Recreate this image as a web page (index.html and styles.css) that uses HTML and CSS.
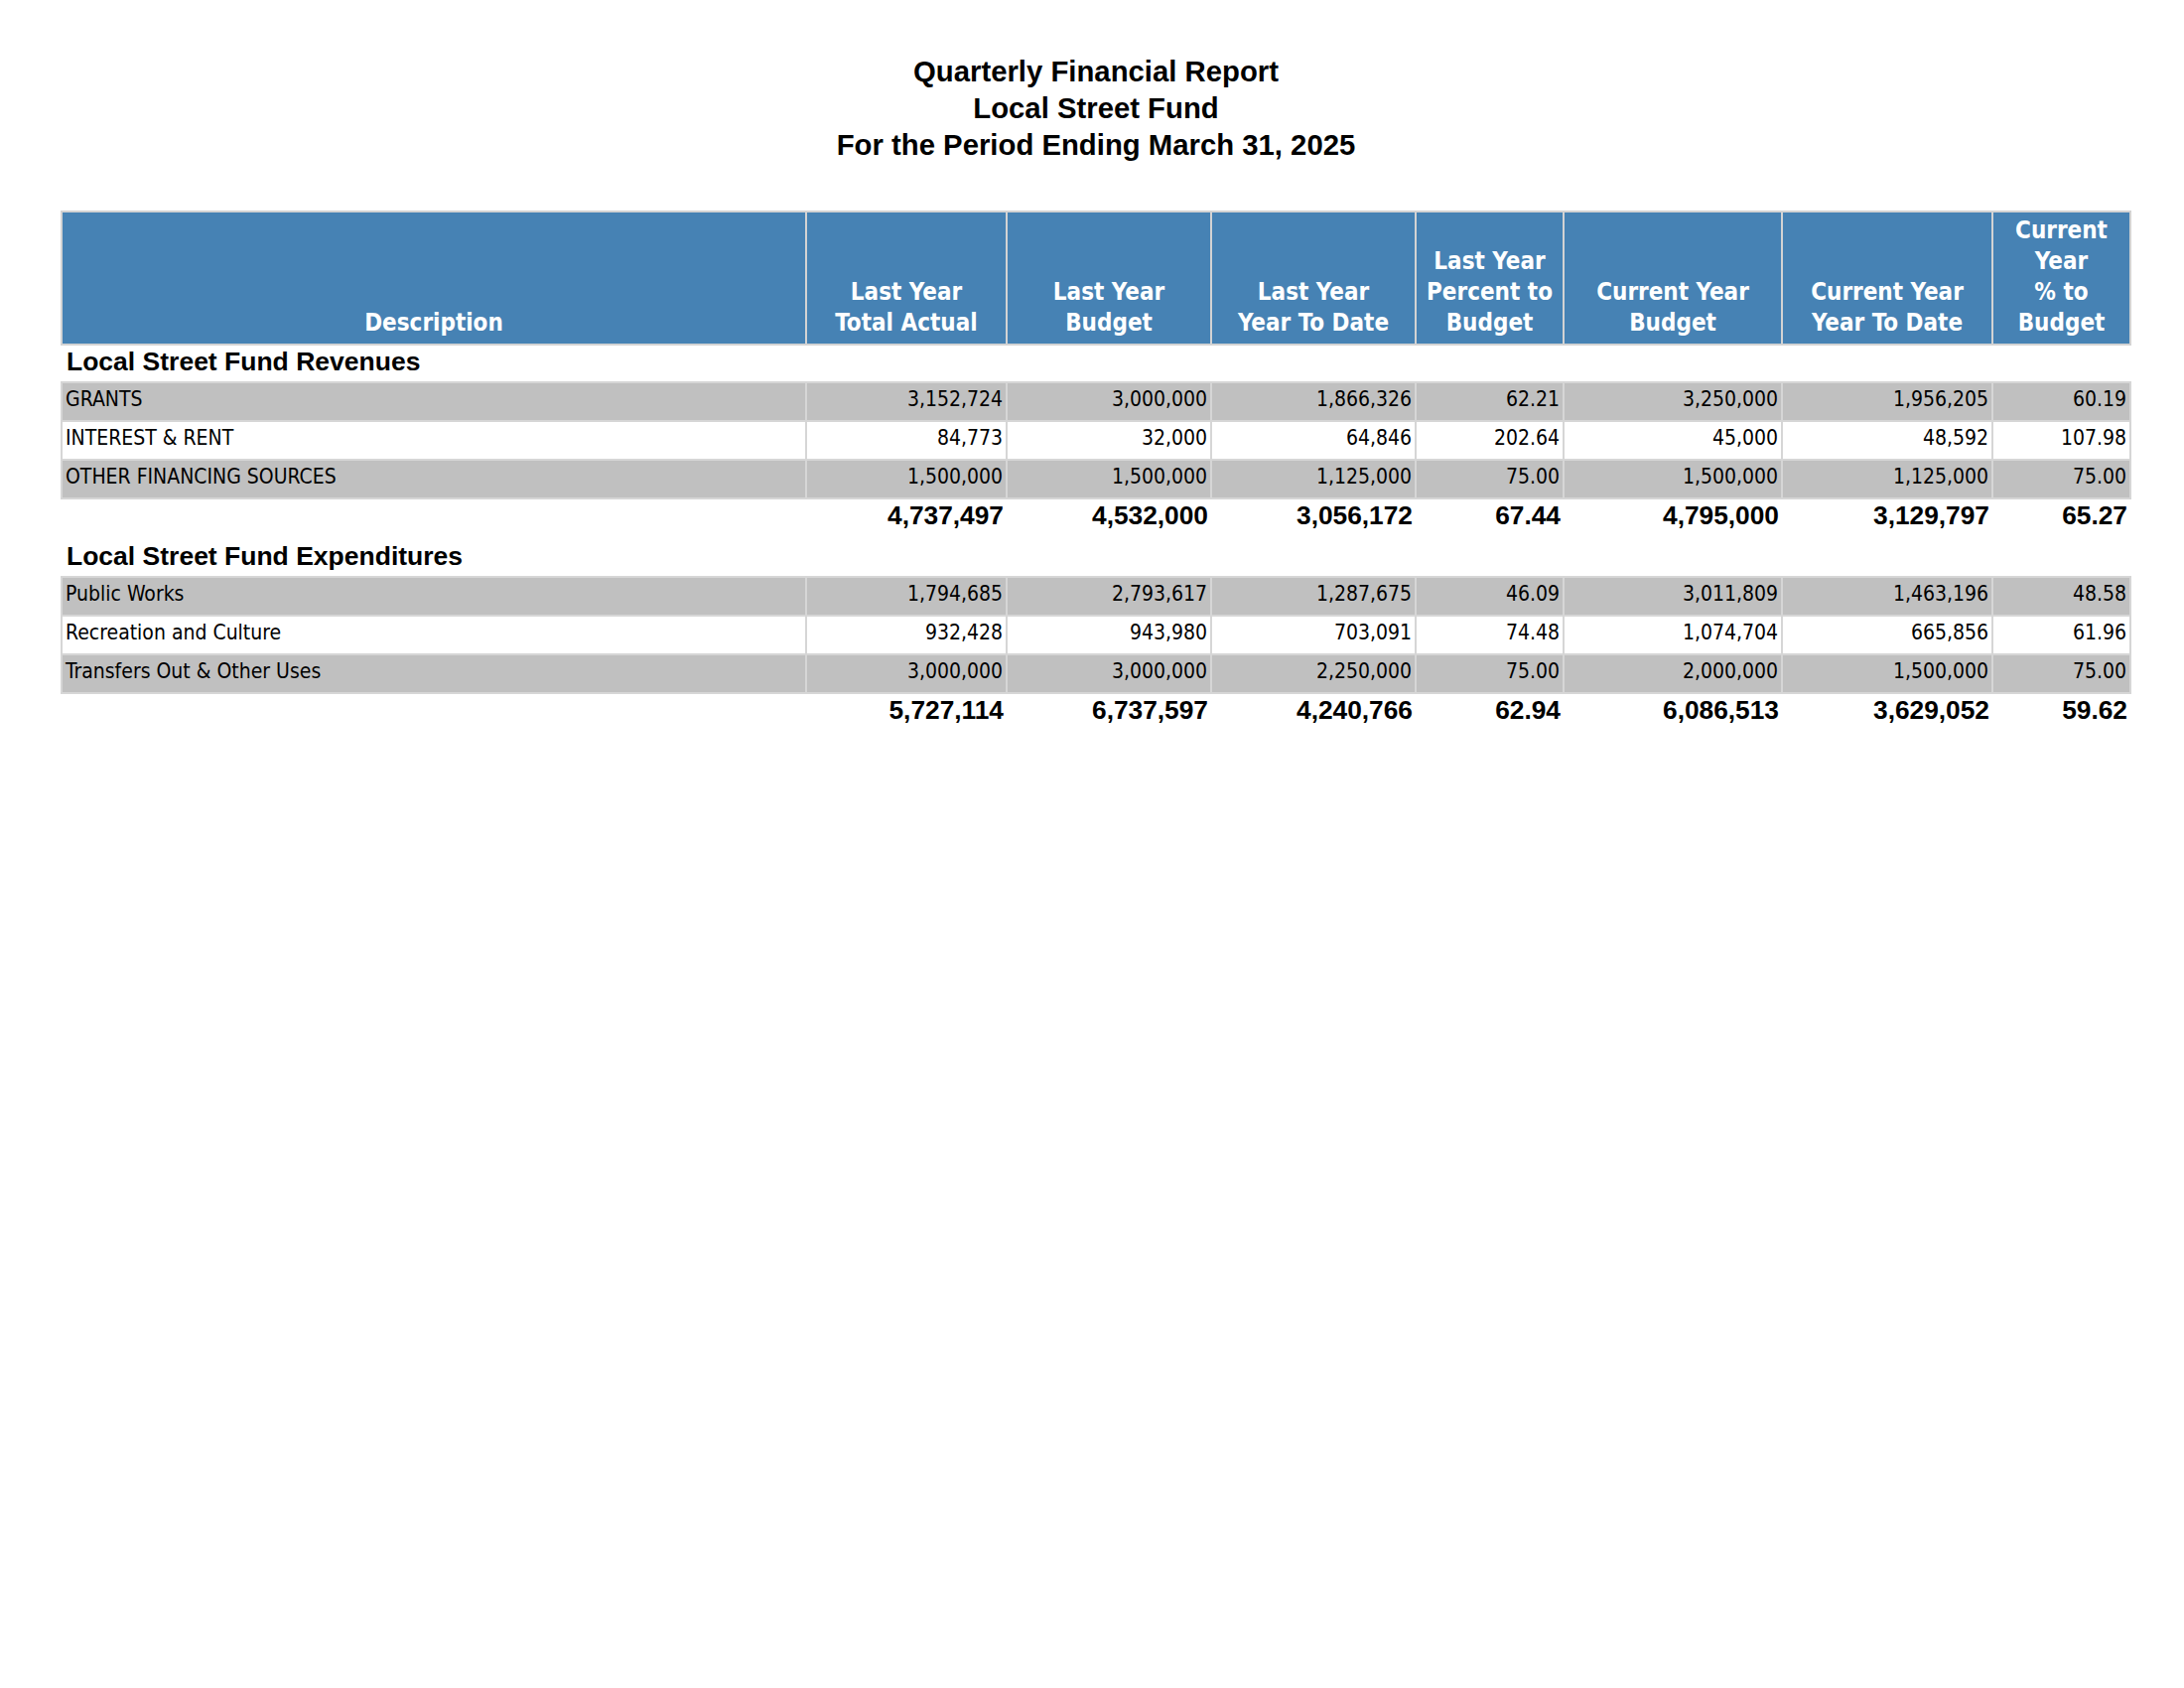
FILE: index.html
```html
<!DOCTYPE html>
<html lang="en">
<head>
<meta charset="utf-8">
<title>Quarterly Financial Report</title>
<link rel="stylesheet" href="styles.css">
</head>
<body>
<div class="page">
  <header class="report-title">
    <div>Quarterly Financial Report</div>
    <div>Local Street Fund</div>
    <div>For the Period Ending March 31, 2025</div>
  </header>
  <table class="report">
    <colgroup>
      <col class="c-desc"><col class="c-a"><col class="c-b"><col class="c-c"><col class="c-d"><col class="c-e"><col class="c-f"><col class="c-g">
    </colgroup>
    <thead>
      <tr>
        <th>Description</th>
        <th>Last Year<br>Total Actual</th>
        <th>Last Year<br>Budget</th>
        <th>Last Year<br>Year To Date</th>
        <th>Last Year<br>Percent to<br>Budget</th>
        <th>Current Year<br>Budget</th>
        <th>Current Year<br>Year To Date</th>
        <th>Current<br>Year<br>% to<br>Budget</th>
      </tr>
    </thead>
    <tbody>
      <tr class="section"><td colspan="8">Local Street Fund Revenues</td></tr>
      <tr class="row alt"><td>GRANTS</td><td>3,152,724</td><td>3,000,000</td><td>1,866,326</td><td>62.21</td><td>3,250,000</td><td>1,956,205</td><td>60.19</td></tr>
      <tr class="row"><td>INTEREST &amp; RENT</td><td>84,773</td><td>32,000</td><td>64,846</td><td>202.64</td><td>45,000</td><td>48,592</td><td>107.98</td></tr>
      <tr class="row alt"><td>OTHER FINANCING SOURCES</td><td>1,500,000</td><td>1,500,000</td><td>1,125,000</td><td>75.00</td><td>1,500,000</td><td>1,125,000</td><td>75.00</td></tr>
      <tr class="total"><td></td><td>4,737,497</td><td>4,532,000</td><td>3,056,172</td><td>67.44</td><td>4,795,000</td><td>3,129,797</td><td>65.27</td></tr>
      <tr class="section"><td colspan="8">Local Street Fund Expenditures</td></tr>
      <tr class="row alt"><td>Public Works</td><td>1,794,685</td><td>2,793,617</td><td>1,287,675</td><td>46.09</td><td>3,011,809</td><td>1,463,196</td><td>48.58</td></tr>
      <tr class="row"><td>Recreation and Culture</td><td>932,428</td><td>943,980</td><td>703,091</td><td>74.48</td><td>1,074,704</td><td>665,856</td><td>61.96</td></tr>
      <tr class="row alt"><td>Transfers Out &amp; Other Uses</td><td>3,000,000</td><td>3,000,000</td><td>2,250,000</td><td>75.00</td><td>2,000,000</td><td>1,500,000</td><td>75.00</td></tr>
      <tr class="total"><td></td><td>5,727,114</td><td>6,737,597</td><td>4,240,766</td><td>62.94</td><td>6,086,513</td><td>3,629,052</td><td>59.62</td></tr>
    </tbody>
  </table>
</div>
</body>
</html>
```

FILE: styles.css
```css
html, body {
  margin: 0;
  padding: 0;
  background: #ffffff;
}

.page {
  padding: 53px 53px 0 61px;
  width: 2086px;
}

.report-title {
  font-family: "Liberation Sans", Arial, sans-serif;
  font-weight: bold;
  font-size: 29.3px;
  line-height: 37px;
  text-align: center;
  color: #000;
  margin-bottom: 48px;
}

.report {
  border-collapse: collapse;
  table-layout: fixed;
  width: 2086px;
  font-family: "DejaVu Sans Condensed", "DejaVu Sans", sans-serif;
  font-stretch: condensed;
  color: #000;
}

.c-desc { width: 750px; }
.c-a { width: 202px; }
.c-b { width: 206px; }
.c-c { width: 206px; }
.c-d { width: 149px; }
.c-e { width: 220px; }
.c-f { width: 212px; }
.c-g { width: 139px; }

.report th {
  background: #4682b4;
  color: #ffffff;
  font-weight: bold;
  font-size: 24px;
  line-height: 31px;
  text-align: center;
  vertical-align: bottom;
  padding: 3px 2px 5px;
  border: 2px solid #d3d3d3;
  white-space: nowrap;
}

.row td {
  font-size: 21px;
  line-height: 24px;
  padding: 4px 3px 9px;
  border: 2px solid #d6d6d6;
  text-align: right;
  white-space: nowrap;
  background: #ffffff;
}

.row td:first-child {
  text-align: left;
}

.row.alt td {
  background: #c0c0c0;
}

.section td {
  font-family: "Liberation Sans", Arial, sans-serif;
  font-weight: bold;
  font-size: 26.5px;
  line-height: 30px;
  padding: 1px 5px 5px;
  text-align: left;
}

.total td {
  font-family: "Liberation Sans", Arial, sans-serif;
  font-weight: bold;
  font-size: 26.3px;
  line-height: 30px;
  padding: 1px 3px 10px;
  text-align: right;
}
```
